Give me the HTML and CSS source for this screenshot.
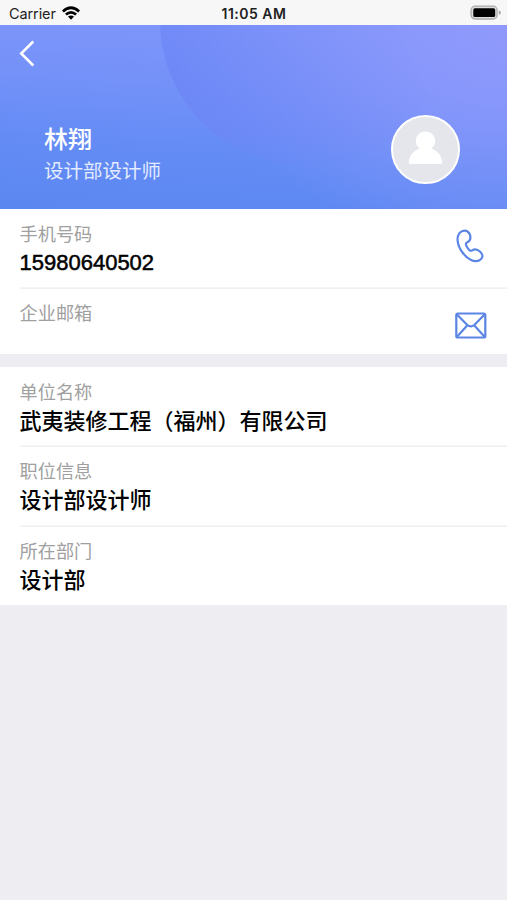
FILE: index.html
```html
<!DOCTYPE html>
<html lang="zh-CN">
<head>
<meta charset="utf-8">
<title>林翔</title>
<link rel="stylesheet" href="styles.css">
</head>
<body>
<div class="status">
  <div class="carrier"><span>Carrier</span>
    <svg class="wifi" width="18" height="14" viewBox="0 0 18 14"><path d="M0 4.5Q9-3.8 18 4.5L16.2 6.5Q9 .1 1.8 6.5Z"/><path d="M3 7.6Q9 2.4 15 7.6L13.2 9.5Q9 6 4.8 9.5Z"/><path d="M6 10.6Q9 8.2 12 10.6L9 13.7Z"/></svg>
  </div>
  <div class="time">11:05 AM</div>
  <svg class="battery" width="32" height="16" viewBox="0 0 32 16"><rect x="1.1" y="1.2" width="26" height="12.8" rx="4" fill="#ddd" stroke="#aaa" stroke-width="1.3"/><rect x="3.3" y="3.3" width="21.9" height="8.8" rx="1.6"/><path d="M28.8 5.3Q31 6 31 7.6T28.8 9.9Z" fill="#aaa"/></svg>
</div>
<header class="hero">
  <svg class="backdrop" viewBox="0 0 507 184" preserveAspectRatio="none">
    <defs>
      <linearGradient id="disc" gradientUnits="userSpaceOnUse" x1="200" y1="110" x2="400" y2="10"><stop offset="0" stop-color="#6c86f5" stop-opacity=".75"/><stop offset="1" stop-color="#7b8df9" stop-opacity="0"/></linearGradient>
      <linearGradient id="fade" x1="0" y1="0" x2="0" y2="1"><stop offset=".7" stop-color="#fff"/><stop offset="1" stop-color="#000"/></linearGradient>
      <mask id="soft" maskUnits="userSpaceOnUse" x="0" y="0" width="507" height="184"><rect width="507" height="150" fill="url(#fade)"/></mask>
    </defs>
    <circle cx="305" cy="-4" r="145" fill="url(#disc)" mask="url(#soft)"/>
  </svg>
  <svg class="back" width="16" height="27" viewBox="0 0 16 27"><path d="M14.3 1.5 2.2 13.5 14.3 25.5" fill="none" stroke="#fff" stroke-width="2.5"/></svg>
  <div class="profile">
    <div>
      <h1 class="name">林翔</h1>
      <p class="role">设计部设计师</p>
    </div>
    <div class="avatar"><svg width="35" height="34" viewBox="0 0 35 34"><path fill="#fff" d="M17.5.5C23 .5 27.2 4.7 27.2 10c0 3.4-1.7 6.3-3.9 7.6 6 2 10.2 6.9 10.9 13.4 .1 1.2-.5 1.9-1.7 1.9H2.3C1.1 32.9.6 32.2.7 31 1.5 24.5 5.7 19.6 11.7 17.6 9.5 16.3 7.8 13.4 7.8 10 7.8 4.7 12 .5 17.5.5Z"/></svg></div>
  </div>
</header>
<main>
  <section class="group contact">
    <div class="row">
      <div><div class="label">手机号码</div><div class="value number">15980640502</div></div>
      <svg class="icon" width="32" height="36" viewBox="0 0 32 36"><path d="M7.5 2.1C11.5.5 15.4 3.4 15.4 8.5 15.4 11 14.5 12.3 12.3 13.3 10.3 14.3 10.6 15.5 12 18 13.8 21 15.3 22.6 17.2 21.3 19.5 19.7 22.5 20.3 25.2 22.8 28.7 26.1 27.8 29.5 24.5 31.2 19.5 33.7 12.5 30.5 7.5 23.5 1 14.5.8 4.8 7.5 2.1Z"/></svg>
    </div>
    <div class="row mail">
      <div class="label">企业邮箱</div>
      <svg class="icon" width="32" height="27" viewBox="0 0 32 27"><rect x="1.3" y="1.5" width="29" height="24" rx="1.5"/><path d="M2 2.5 12.3 13Q15.8 15.8 19.3 13L29.6 2.5M2 24.7 12 13.8M29.6 24.7 19.6 13.8"/></svg>
    </div>
  </section>
  <section class="group">
    <div class="row"><div><div class="label">单位名称</div><div class="value">武夷装修工程（福州）有限公司</div></div></div>
    <div class="row"><div><div class="label">职位信息</div><div class="value">设计部设计师</div></div></div>
    <div class="row"><div><div class="label">所在部门</div><div class="value">设计部</div></div></div>
  </section>
</main>
</body>
</html>
```
FILE: styles.css
```css
* { box-sizing: border-box; margin: 0; }
body {
  min-height: 900px;
  background: #eeeef2;
  color: #000;
  font-family: "Liberation Sans", "Noto Sans CJK SC", sans-serif;
}
.status {
  display: grid;
  grid-template-columns: 1fr auto 1fr;
  align-items: center;
  height: 25px;
  padding: 2px 5px 0 9px;
  background: #f7f7f7;
  font: 14.5px/20px Inter, sans-serif;
  color: #222;
}
.carrier { display: flex; align-items: center; gap: 6px; }
.carrier span { letter-spacing: -.1px; }
.wifi { margin-top: -2px; fill: #000; }
.time { margin-right: 3px; font-size: 14px; font-weight: 600; letter-spacing: .5px; }
.battery { justify-self: end; margin-top: -2px; }
.hero {
  position: relative;
  height: 183.5px;
  padding: 15px 47px 0 19px;
  background:
    radial-gradient(ellipse 300px 230px at 507px 0, #8f99fc 5%, rgba(143,153,252,0) 100%),
    linear-gradient(184deg, #8197fb 0%, #7592f9 35%, #658cf5 65%, #5b87f1 100%);
}
.backdrop { position: absolute; inset: 0; width: 100%; height: 100%; }
.back { position: relative; display: block; }
.profile {
  position: relative;
  display: flex;
  justify-content: space-between;
  margin: 48px 0 0 25px;
  color: #fff;
}
.name { padding-top: 8px; font-size: 24px; line-height: 34px; font-weight: 500; }
.role { font-size: 19.5px; line-height: 28px; color: #e4ecff; font-weight: 400; }
.avatar {
  display: grid;
  place-items: center;
  width: 69px;
  height: 69px;
  border: 2px solid #fff;
  border-radius: 50%;
  background: #e4e6eb;
}
.avatar svg { margin-top: -3px; }
.group { margin-bottom: 13px; padding-left: 19.5px; background: #fff; }
.row {
  display: flex;
  justify-content: space-between;
  height: 79.4px;
  padding: 12px 20px 0 0;
  box-shadow: 0 1px #f0f0f2, 0 -1px #f6f6f8 inset;
}
.row:last-child { box-shadow: none; }
.row.mail { height: 66px; }
.label { font-size: 18.2px; line-height: 28px; color: #a0a0a0; font-weight: 400; }
.value { font-size: 22px; line-height: 29px; font-weight: 500; }
.number { margin-top: -1px; -webkit-text-stroke: .5px #000; }
.icon { margin-top: 8.5px; fill: none; stroke: #5b85e4; stroke-width: 2.2; stroke-linejoin: round; }
.mail .icon { margin-top: 12px; }
```
